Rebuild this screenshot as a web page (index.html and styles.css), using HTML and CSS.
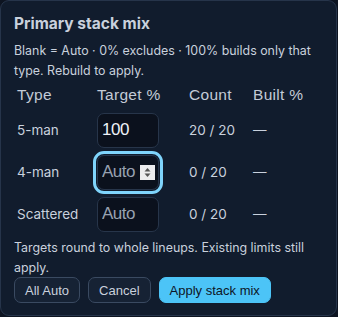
FILE: index.html
```html
<!DOCTYPE html>
<html lang="en">

<head>
    <meta charset="UTF-8">
    <meta name="viewport" content="width=device-width, initial-scale=1.0">
    <title>Primary stack mix</title>
    <link rel="stylesheet" href="styles.css">
</head>

<body>
    <div class="panel">
        <h2 class="panel-title">Primary stack mix</h2>
        <p class="hint">Blank = Auto · 0% excludes · 100% builds only that type. Rebuild to apply.</p>
        <div class="mix-table">
            <div class="th">Type</div>
            <div class="th">Target %</div>
            <div class="th">Count</div>
            <div class="th">Built %</div>

            <div class="td label">5-man</div>
            <div class="td"><input class="target" type="text" value="100" placeholder="Auto"></div>
            <div class="td num">20 / 20</div>
            <div class="td num">—</div>

            <div class="td label">4-man</div>
            <div class="td">
                <span class="target-wrap">
                    <input class="target focused" type="text" placeholder="Auto">
                    <span class="spin">
                        <svg width="9" height="13" viewBox="0 0 9 13">
                            <path d="M1.5 5.5 L4.5 2 L7.5 5.5 Z" fill="#555"/>
                            <path d="M1.5 7.5 L4.5 11 L7.5 7.5 Z" fill="#555"/>
                        </svg>
                    </span>
                </span>
            </div>
            <div class="td num">0 / 20</div>
            <div class="td num">—</div>

            <div class="td label">Scattered</div>
            <div class="td"><input class="target" type="text" placeholder="Auto"></div>
            <div class="td num">0 / 20</div>
            <div class="td num">—</div>
        </div>
        <p class="hint foot">Targets round to whole lineups. Existing limits still apply.</p>
        <div class="actions">
            <button class="btn">All Auto</button>
            <button class="btn">Cancel</button>
            <button class="btn btn-primary">Apply stack mix</button>
        </div>
    </div>
</body>

</html>
```

FILE: styles.css
```css
* {
    box-sizing: border-box;
}

body {
    margin: 0;
    background: #0d1421;
    font-family: Inter, "Noto Sans", sans-serif;
    color: #c9d1dd;
}

.panel {
    width: 337px;
    height: 316px;
    padding: 11px 13px 12px 13px;
    background: #111c2d;
    border: 1px solid #26344a;
    border-radius: 9px;
}

.panel-title {
    margin: 0;
    font-size: 15.5px;
    line-height: 24px;
    font-weight: 700;
    color: #c9d1dd;
}

.hint {
    margin: 5px 0 0 0;
    font-size: 12.4px;
    line-height: 20px;
    color: #c9d1dd;
}

.hint.foot {
    margin-top: 3px;
    line-height: 19.5px;
}

.mix-table {
    display: grid;
    grid-template-columns: 80px 92px 64px auto;
    margin-top: 1px;
}

.th,
.td {
    padding-left: 3px;
    display: flex;
    align-items: center;
}

.th {
    height: 27px;
    padding-bottom: 1px;
    font-family: "Liberation Sans", Arial, sans-serif;
    font-size: 15.5px;
    color: #c3cbd7;
    letter-spacing: 0.3px;
}

.td {
    height: 42px;
    font-size: 13.5px;
    color: #c9d1dd;
}

.target-wrap {
    position: relative;
    display: inline-block;
}

.target {
    display: block;
    width: 62px;
    height: 35px;
    padding: 0 4px;
    background: #0b111d;
    border: 1px solid #27354a;
    border-radius: 7px;
    font-family: "Liberation Sans", Arial, sans-serif;
    font-size: 17px;
    letter-spacing: -0.5px;
    color: #eef2f7;
    outline: none;
}

.target::placeholder {
    color: #98a1b0;
}

.target.focused {
    outline: 3px solid #7fd4fb;
    outline-offset: 1px;
}

.spin {
    position: absolute;
    right: 4px;
    top: 10px;
    width: 15px;
    height: 15px;
    background: #ececee;
    display: flex;
    align-items: center;
    justify-content: center;
}

.spin svg {
    display: block;
}

.actions {
    display: flex;
    gap: 8px;
}

.btn {
    height: 26px;
    padding: 0 10px;
    background: #162234;
    border: 1px solid #3a4a61;
    border-radius: 7px;
    font-family: "Liberation Sans", Arial, sans-serif;
    font-size: 13px;
    color: #c9d1dd;
}

.btn-primary {
    background: #4cc4f7;
    border-color: #4cc4f7;
    color: #0c1626;
}
```
